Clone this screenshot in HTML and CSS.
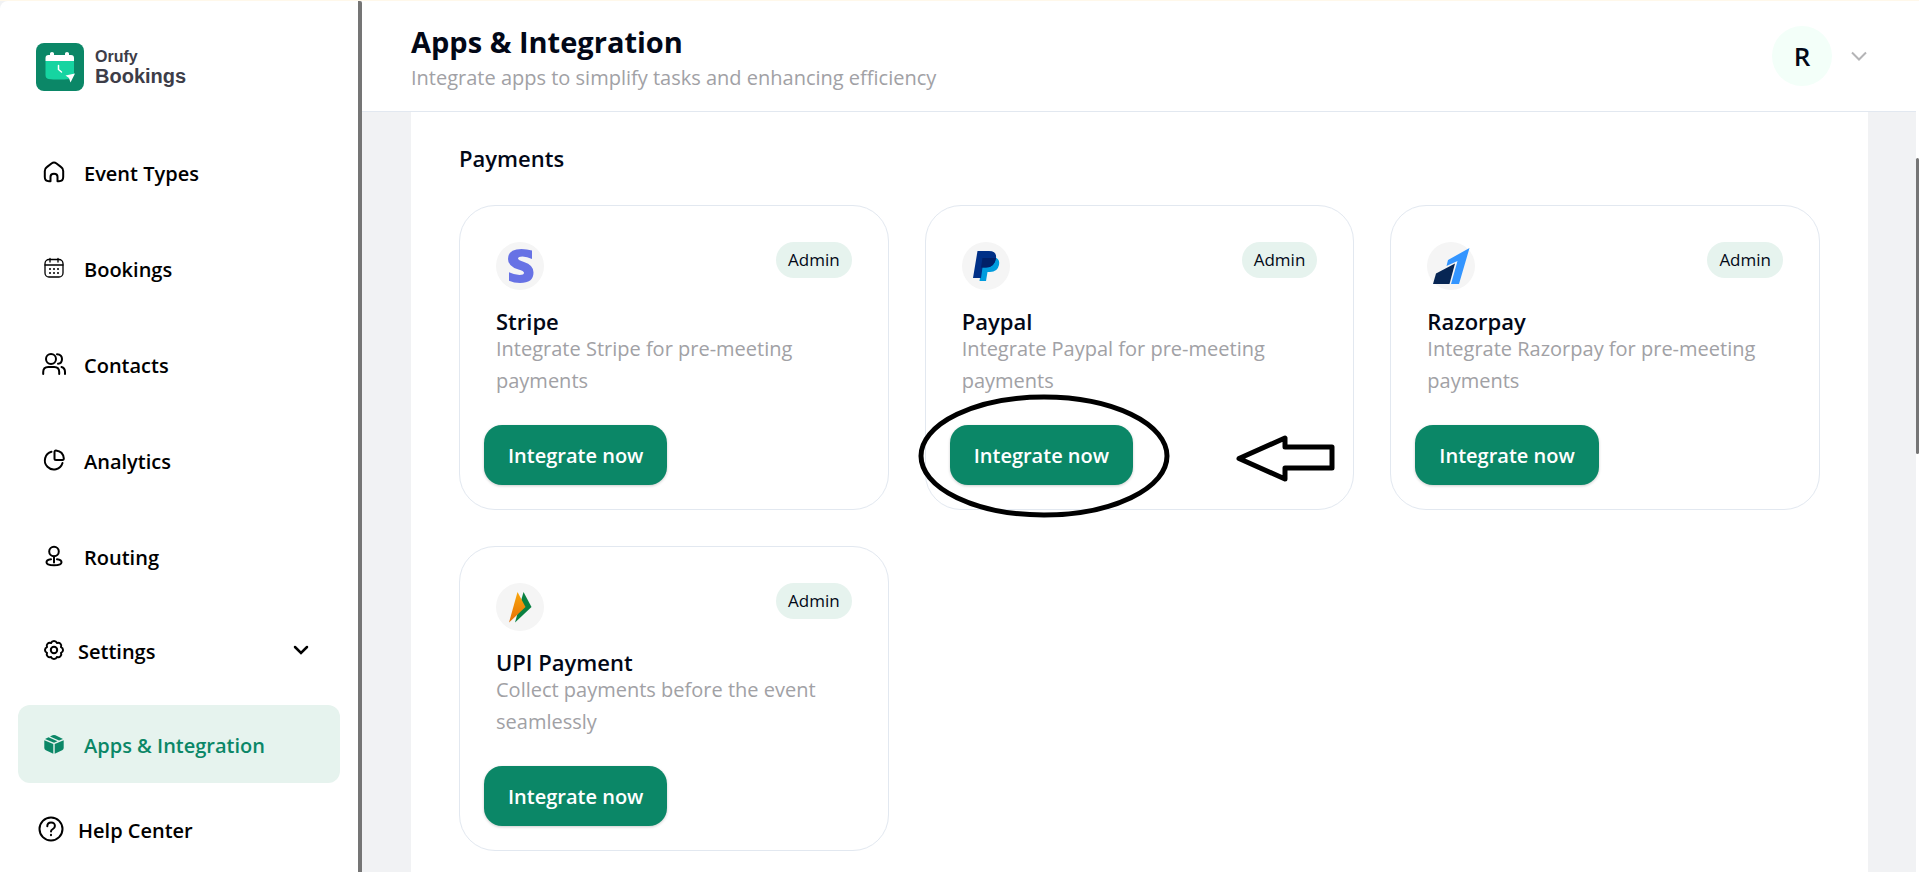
FILE: index.html
```
<!DOCTYPE html>
<html lang="en">
<head>
    <meta charset="UTF-8">
    <meta name="viewport" content="width=device-width, initial-scale=1.0">
    <title>Apps &amp; Integration - Orufy Bookings</title>
    <link rel="stylesheet" href="styles.css">
</head>
<body>
    <div class="app">
        <aside class="sidebar">
            <a class="logo" href="#">
                <svg width="48" height="48" viewBox="0 0 48 48">
                    <rect width="48" height="48" rx="8" fill="#0b8767"/>
                    <path d="M9.500 18h28.500v13l-4 5q-12 1-21.500 0-3-.5-3-4z" fill="#16d4a1"/>
                    <path d="M9.500 18v-3q0-3 3-3h1.500v-1.500q0-1.500 2-1.500t2 1.500v1.500h11v-1.500q0-1.500 2-1.500t2 1.500v1.500h2q3 0 3 3v3z" fill="#fff"/>
                    <path d="M22.500 22.500v4l3 2.500" fill="none" stroke="#fff" stroke-width="1.500" stroke-linecap="round"/>
                    <path d="M29.500 32.500l9.500-2-4.500 9-1.500-4.500z" fill="#fff"/>
                </svg>
                <span class="logo-text">
                    <span class="logo-top">Orufy</span>
                    <span class="logo-name">Bookings</span>
                </span>
            </a>
            <nav class="menu">
                <a class="menu-item" href="#">
                    <svg width="24" height="24" viewBox="0 0 24 24">
                        <path d="M8.500 21.200H7q-4.200 0-4.200-4.200v-6q0-2.500 2-3.900l4.700-3.600q2.500-1.800 5 0l4.700 3.600q2 1.400 2 3.900v6q0 4.200-4.200 4.200h-1.500v-4.500q0-3-3.500-3t-3.500 3z"/>
                    </svg>
                    <span>Event Types</span>
                </a>
                <a class="menu-item" href="#">
                    <svg width="24" height="24" viewBox="0 0 24 24">
                        <g stroke-width="1.300">
                            <rect x="3" y="3.500" width="18" height="17.500" rx="4"/>
                            <path d="M3 9h18M8 2.500v3.500M16 2.500v3.500"/>
                        </g>
                        <path d="M8 13h.01M12 13h.01M16 13h.01M8 17h.01M12 17h.01M16 17h.01"/>
                    </svg>
                    <span>Bookings</span>
                </a>
                <a class="menu-item" href="#">
                    <svg width="24" height="24" viewBox="0 0 24 24">
                        <circle cx="9" cy="7" r="5"/>
                        <path d="M1.200 22v-2q0-5 5-5h6q5 0 5 5v2M15 2.200q5 .3 5 4.800t-4 4.800M19.500 15q3.500 1 3.500 5v2"/>
                    </svg>
                    <span>Contacts</span>
                </a>
                <a class="menu-item" href="#">
                    <svg width="24" height="24" viewBox="0 0 24 24">
                        <path d="M9.500 3.800a9 9 0 1 0 11 11.200"/>
                        <path d="M12.500 4q0-1.500 1.500-1.400 7 .8 7.800 7.800.1 1.500-1.300 1.500h-6.500q-1.500 0-1.500-1.500z"/>
                    </svg>
                    <span>Analytics</span>
                </a>
                <a class="menu-item" href="#">
                    <svg width="24" height="24" viewBox="0 0 24 24">
                        <circle cx="12" cy="7.500" r="4.800"/>
                        <path d="M12 12.500v6M9 15.300q-4.500.6-4.500 3 0 3 7.500 3t7.500-3q0-2.400-4.500-3"/>
                    </svg>
                    <span>Routing</span>
                </a>
                <button class="menu-item settings" type="button">
                    <svg width="24" height="24" viewBox="0 0 24 24">
                        <circle cx="12" cy="12" r="3.200"/>
                        <path d="M19 14.900A3.100 3.100 0 0 1 14.900 19A3.100 3.100 0 0 1 9.100 19A3.100 3.100 0 0 1 5 14.900A3.100 3.100 0 0 1 5 9.100A3.100 3.100 0 0 1 9.100 5A3.100 3.100 0 0 1 14.900 5A3.100 3.100 0 0 1 19 9.100A3.100 3.100 0 0 1 19 14.900z"/>
                    </svg>
                    <span>Settings</span>
                    <svg class="arrow" width="18" height="18" viewBox="0 0 18 18">
                        <path d="M3 6l6 6 6-6" stroke-width="2.500" stroke-linejoin="miter"/>
                    </svg>
                </button>
                <a class="menu-item active" href="#">
                    <svg width="24" height="24" viewBox="0 0 24 24">
                        <g fill="currentColor" stroke="none">
                            <path d="M2.300 8.300l9 3.800v9.700l-7.500-3.500q-1.500-.8-1.500-2.300z"/>
                            <path d="M21.700 8.300l-9 3.800v9.700l7.500-3.500q1.500-.8 1.500-2.300z"/>
                            <path d="M3 7l3.500-1.700 9 4-3.500 1.500z"/>
                            <path d="M8 4.600l2.500-1.300q1.500-.7 3 0L21 7l-4 1.600z"/>
                        </g>
                    </svg>
                    <span>Apps &amp; Integration</span>
                </a>
                <a class="menu-item help" href="#">
                    <svg width="30" height="30" viewBox="0 0 30 30">
                        <circle cx="15" cy="15" r="11.500"/>
                        <path d="M11.300 12.200q0-3.700 3.800-3.700t3.800 3.500q0 1.800-2 3t-1.900 2.500M15 20.800v.4"/>
                    </svg>
                    <span>Help Center</span>
                </a>
            </nav>
        </aside>

        <div class="page">
            <header class="header">
                <div class="heading">
                    <h1>Apps &amp; Integration</h1>
                    <p>Integrate apps to simplify tasks and enhancing efficiency</p>
                </div>
                <button class="account" type="button" aria-label="Account">
                    <span class="avatar">R</span>
                    <svg width="18" height="18" viewBox="0 0 18 18">
                        <path d="M2 5.500l7 7 7-7" fill="none" stroke="#b4b4b6" stroke-width="2"/>
                    </svg>
                </button>
            </header>

            <main class="content">
                <section class="panel">
                    <h2>Payments</h2>
                    <div class="cards">
                        <article class="card">
                            <div class="card-top">
                                <div class="icon">
                                    <svg width="48" height="48" viewBox="0 0 48 48">
                                        <path d="M36 8.500v8.500q-5-2.500-9.500-2.500-4.500 0-4.500 2 0 1.700 6 3.500 9.500 3 9.500 10.500 0 10.500-13.500 10.500-6 0-11-2.300v-8.500q6 2.800 10.500 2.800 4.500 0 4.500-2.200 0-1.800-5.500-3.300-10.500-3-10.500-10.500 0-10 13.500-10 5.500 0 10.500 1.500z" fill="#6772e5"/>
                                    </svg>
                                </div>
                                <span class="badge">Admin</span>
                            </div>
                            <h3>Stripe</h3>
                            <p>Integrate Stripe for pre-meeting payments</p>
                            <button class="integrate" type="button">Integrate now</button>
                        </article>

                        <article class="card">
                            <div class="card-top">
                                <div class="icon">
                                    <svg width="48" height="48" viewBox="0 0 48 48">
                                        <path d="M21 16h13.500q3.500 2 2.500 7-1.500 7-9 7h-2.500l-1.500 9h-6.500z" fill="#009cde"/>
                                        <path d="M15.500 9h11.500q8 0 7 7.500-1.500 9-10 9h-3.500l-1.500 10.500h-8z" fill="#003087"/>
                                        <path d="M20.500 16h13.500q-1.500 9.500-10 9.500h-5z" fill="#012169"/>
                                    </svg>
                                </div>
                                <span class="badge">Admin</span>
                            </div>
                            <h3>Paypal</h3>
                            <p>Integrate Paypal for pre-meeting payments</p>
                            <button class="integrate" type="button">Integrate now</button>
                            <!-- circle and arrow drawn over the card -->
                            <svg class="marker" width="418" height="126" viewBox="0 0 418 126">
                                <ellipse cx="126" cy="63" rx="123" ry="59"/>
                                <path d="M321 65.500L367 45v9h47v21h-47v11z" stroke-linejoin="round"/>
                            </svg>
                        </article>

                        <article class="card">
                            <div class="card-top">
                                <div class="icon">
                                    <svg width="48" height="48" viewBox="0 0 48 48">
                                        <path d="M42.500 6L32 42h-8l6.500-23-11 5 1.500-6z" fill="#3395ff"/>
                                        <path d="M28 21.500L22.500 42H6l3-10.500z" fill="#072654"/>
                                    </svg>
                                </div>
                                <span class="badge">Admin</span>
                            </div>
                            <h3>Razorpay</h3>
                            <p>Integrate Razorpay for pre-meeting payments</p>
                            <button class="integrate" type="button">Integrate now</button>
                        </article>

                        <article class="card">
                            <div class="card-top">
                                <div class="icon">
                                    <svg width="48" height="48" viewBox="0 0 48 48">
                                        <defs>
                                            <linearGradient id="upi" x1="0" y1="0" x2="0" y2="1">
                                                <stop offset="0" stop-color="#f9a70b"/>
                                                <stop offset="1" stop-color="#e66f06"/>
                                            </linearGradient>
                                        </defs>
                                        <path d="M27.500 9l8 15L19 39.500z" fill="#098041"/>
                                        <path d="M21.500 9l8 15L13 39.500z" fill="url(#upi)"/>
                                    </svg>
                                </div>
                                <span class="badge">Admin</span>
                            </div>
                            <h3>UPI Payment</h3>
                            <p>Collect payments before the event seamlessly</p>
                            <button class="integrate" type="button">Integrate now</button>
                        </article>
                    </div>
                </section>
            </main>
        </div>

        <div class="scrollbar">
            <div class="thumb"></div>
        </div>
    </div>
</body>
</html>
```
FILE: styles.css
```
* {
    box-sizing: border-box;
}
body {
    margin: 0;
    font-family: "Segoe UI", "Open Sans", "Noto Sans", sans-serif;
    font-size: 20px;
    color: #020817;
    background-color: #f1f2f4;
}
h1, h2, h3, p {
    margin: 0;
}
button {
    font: inherit;
    color: inherit;
    border: none;
    background: none;
    cursor: pointer;
}
.app {
    display: flex;
    height: 100vh;
    overflow: hidden;
    border-top: 1px solid #fff8ea;
}
.sidebar {
    flex: 0 0 362px;
    background-color: #fff;
    border-right: 4px solid #757575;
    border-radius: 8px 2px 0 0;
}
.logo {
    display: flex;
    align-items: center;
    gap: 11px;
    padding: 42px 36px;
    color: #3d3d48;
    font-family: "Liberation Sans", Arial, sans-serif;
    text-decoration: none;
}
.logo-text {
    display: flex;
    flex-direction: column;
    font-weight: bold;
}
.logo-top {
    font-size: 16px;
    line-height: 18px;
}
.logo-name {
    font-size: 20px;
    line-height: 20px;
}
.menu {
    display: flex;
    flex-direction: column;
    gap: 18px;
    padding: 0 18px;
}
.menu-item {
    display: flex;
    align-items: center;
    gap: 18px;
    height: 78px;
    padding: 0 24px;
    border-radius: 12px;
    color: #000;
    font-weight: 600;
    text-align: left;
    text-decoration: none;
}
.menu-item span {
    padding-top: 2px;
}
.menu-item svg {
    fill: none;
    stroke: currentColor;
    stroke-width: 2;
    stroke-linecap: round;
    stroke-linejoin: round;
}
.menu-item.settings {
    gap: 12px;
    height: 74px;
}
.menu-item.help {
    gap: 12px;
    height: 56px;
    padding: 0 18px;
}
.menu-item .arrow {
    margin-left: auto;
    margin-right: 6px;
}
.menu-item.active {
    background-color: #e6f3ee;
    color: #0b8767;
}
.page {
    flex: 1;
    display: flex;
    flex-direction: column;
    min-width: 0;
}
.header {
    display: flex;
    justify-content: space-between;
    align-items: center;
    flex: 0 0 111px;
    padding: 0 48px 0 49px;
    background-color: #fff;
    border-bottom: 1px solid #e2e8f0;
}
.heading {
    padding-top: 8px;
}
h1 {
    font-size: 29px;
    line-height: 36px;
    font-weight: 700;
}
.header p {
    line-height: 36px;
    color: #a1a1a5;
}
.account {
    display: flex;
    align-items: center;
    gap: 18px;
    padding: 0;
}
.avatar {
    width: 60px;
    height: 60px;
    border-radius: 50%;
    background-color: #f3fff9;
    font-size: 26px;
    font-weight: 600;
    line-height: 60px;
    text-align: center;
}
.content {
    flex: 1;
    padding: 0 48px 0 49px;
}
.panel {
    min-height: 100%;
    padding: 28px 48px;
    background-color: #fff;
}
h2 {
    margin-bottom: 29px;
    font-size: 22px;
    line-height: 36px;
    font-weight: 600;
}
.cards {
    display: grid;
    grid-template-columns: repeat(3, 1fr);
    gap: 36px;
}
.card {
    position: relative;
    padding: 36px 36px 24px;
    border: 1px solid #e2e8f0;
    border-radius: 36px;
}
.card-top {
    display: flex;
    justify-content: space-between;
    align-items: flex-start;
    margin-bottom: 19px;
}
.icon {
    height: 48px;
    border-radius: 50%;
    background-color: #f5f5f5;
}
.badge {
    padding: 0 12px;
    border-radius: 18px;
    background-color: #e6f3ee;
    font-size: 17px;
    line-height: 36px;
}
h3 {
    font-size: 22px;
    line-height: 24px;
    font-weight: 600;
}
.card p {
    max-width: 336px;
    margin-bottom: 28px;
    line-height: 32px;
    color: #a1a1a5;
}
.integrate {
    display: block;
    height: 60px;
    margin-left: -12px;
    padding: 0 24px;
    border-radius: 18px;
    background-color: #0b8767;
    box-shadow: 0 1px 3px rgba(0, 0, 0, 0.2);
    color: #fff;
    font-weight: 600;
}
.marker {
    position: absolute;
    top: 187px;
    left: -8px;
    fill: none;
    stroke: #000;
    stroke-width: 5;
    pointer-events: none;
}
.scrollbar {
    flex: 0 0 3px;
    padding-top: 18vh;
    background-color: #fff;
}
.thumb {
    height: 34vh;
    border-radius: 2px;
    background-color: #757575;
}
```
